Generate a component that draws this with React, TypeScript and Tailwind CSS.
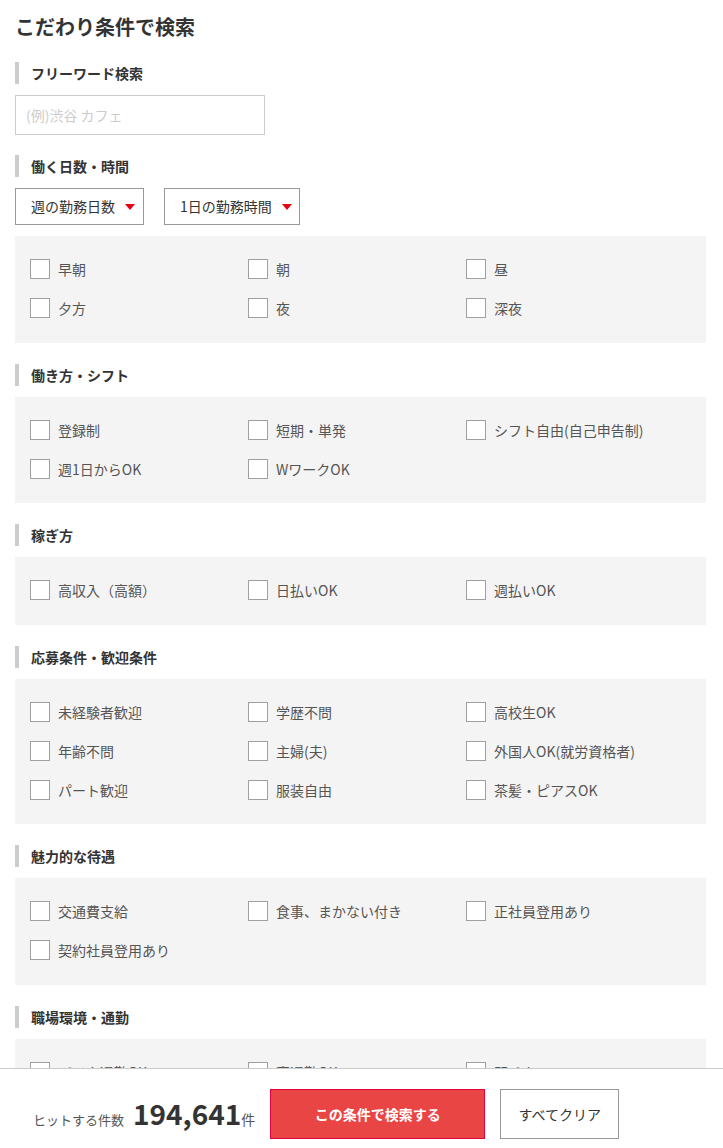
import React, { useState } from "react";

interface Section {
	title: string;
	items: string[];
}

const sections: Section[] = [
	{ title: "働き方・シフト", items: ["登録制", "短期・単発", "シフト自由(自己申告制)", "週1日からOK", "WワークOK"] },
	{ title: "稼ぎ方", items: ["高収入（高額）", "日払いOK", "週払いOK"] },
	{
		title: "応募条件・歓迎条件",
		items: ["未経験者歓迎", "学歴不問", "高校生OK", "年齢不問", "主婦(夫)", "外国人OK(就労資格者)", "パート歓迎", "服装自由", "茶髪・ピアスOK"],
	},
	{ title: "魅力的な待遇", items: ["交通費支給", "食事、まかない付き", "正社員登用あり", "契約社員登用あり"] },
	{ title: "職場環境・通勤", items: ["バイク通勤OK", "車通勤OK", "駅チカ", "禁煙・分煙", "髪型自由", "制服あり"] },
];

const timeItems = ["早朝", "朝", "昼", "夕方", "夜", "深夜"];

const Heading: React.FC<{ title: string; first?: boolean }> = ({ title, first }) => (
	<div
		className={`${first ? "mt-[20px]" : "mt-[21px]"} border-l-[4px] border-[#cccccc] pl-[12px] h-[22px] leading-[22px] text-[14px] font-bold text-[#333333]`}
	>
		{title}
	</div>
);

const CheckGrid: React.FC<{ items: string[]; checked: Record<string, boolean>; toggle: (k: string) => void }> = ({
	items,
	checked,
	toggle,
}) => (
	<div className="mt-[11px] bg-[#f4f4f4] pl-[15px] pt-[23px] pb-[24.5px] grid grid-cols-[218px_218px_1fr] gap-y-[19px]">
		{items.map((item) => (
			<label key={item} className="flex items-center gap-[8px] h-[20px] cursor-pointer" onClick={() => toggle(item)}>
				<span className="w-[20px] h-[20px] shrink-0 border border-[#a0a0a0] bg-white flex items-center justify-center">
					{checked[item] && (
						<svg width="12" height="10" viewBox="0 0 12 10">
							<path d="M1 5l3.5 3.5L11 1" fill="none" stroke="#e94545" strokeWidth="2" />
						</svg>
					)}
				</span>
				<span className="text-[14px] leading-[20px] text-[#555555] whitespace-nowrap">{item}</span>
			</label>
		))}
	</div>
);

const Select: React.FC<{ label: string; width: string }> = ({ label, width }) => (
	<button
		className={`${width} h-[37px] border border-[#999999] bg-white flex items-center pl-[15px] gap-[10px] text-[14px] text-[#333333]`}
	>
		<span>{label}</span>
		<svg width="10" height="6" viewBox="0 0 10 6">
			<path d="M0 0h10L5 6z" fill="#e60012" />
		</svg>
	</button>
);

const App: React.FC = () => {
	const [checked, setChecked] = useState<Record<string, boolean>>({});
	const [keyword, setKeyword] = useState("");
	const toggle = (k: string) => setChecked((c) => ({ ...c, [k]: !c[k] }));

	return (
		<div className="min-h-screen bg-white" style={{ fontFamily: '"Noto Sans CJK JP", "Noto Sans", sans-serif' }}>
			<div className="pl-[15px] pr-[17px] pt-[12px] pb-[120px]">
				<h1 className="text-[20px] leading-[30px] font-bold text-[#333333]">こだわり条件で検索</h1>

				<Heading title="フリーワード検索" first />
				<input
					type="text"
					value={keyword}
					onChange={(e) => setKeyword(e.target.value)}
					placeholder="(例)渋谷 カフェ"
					className="mt-[11px] block w-[250px] h-[40px] border border-[#cccccc] px-[10px] text-[14px] text-[#333333] placeholder:text-[#cccccc] outline-none"
				/>

				<Heading title="働く日数・時間" first />
				<div className="mt-[11px] flex gap-[20px]">
					<Select label="週の勤務日数" width="w-[129px]" />
					<Select label="1日の勤務時間" width="w-[136px]" />
				</div>
				<CheckGrid items={timeItems} checked={checked} toggle={toggle} />

				{sections.map((s) => (
					<div key={s.title}>
						<Heading title={s.title} />
						<CheckGrid items={s.items} checked={checked} toggle={toggle} />
					</div>
				))}
			</div>

			<div className="fixed bottom-0 left-0 right-0 h-[80px] bg-white border-t border-[#cccccc] pt-[20px] pl-[33px]">
				<div className="flex items-center h-[50px]">
					<div className="flex items-baseline text-[#555555]">
						<span className="text-[13px]">ヒットする件数</span>
						<span className="ml-[9px] text-[28px] font-bold text-[#333333] leading-none">194,641</span>
						<span className="text-[14px]">件</span>
					</div>
					<button className="ml-[15px] w-[215px] h-[50px] bg-[#ea4545] border border-[#e6003c] text-white text-[14px] font-bold">
						この条件で検索する
					</button>
					<button className="ml-[15px] w-[119px] h-[50px] bg-white border border-[#999999] text-[#333333] text-[14px]">
						すべてクリア
					</button>
				</div>
			</div>
		</div>
	);
};

export default App;
